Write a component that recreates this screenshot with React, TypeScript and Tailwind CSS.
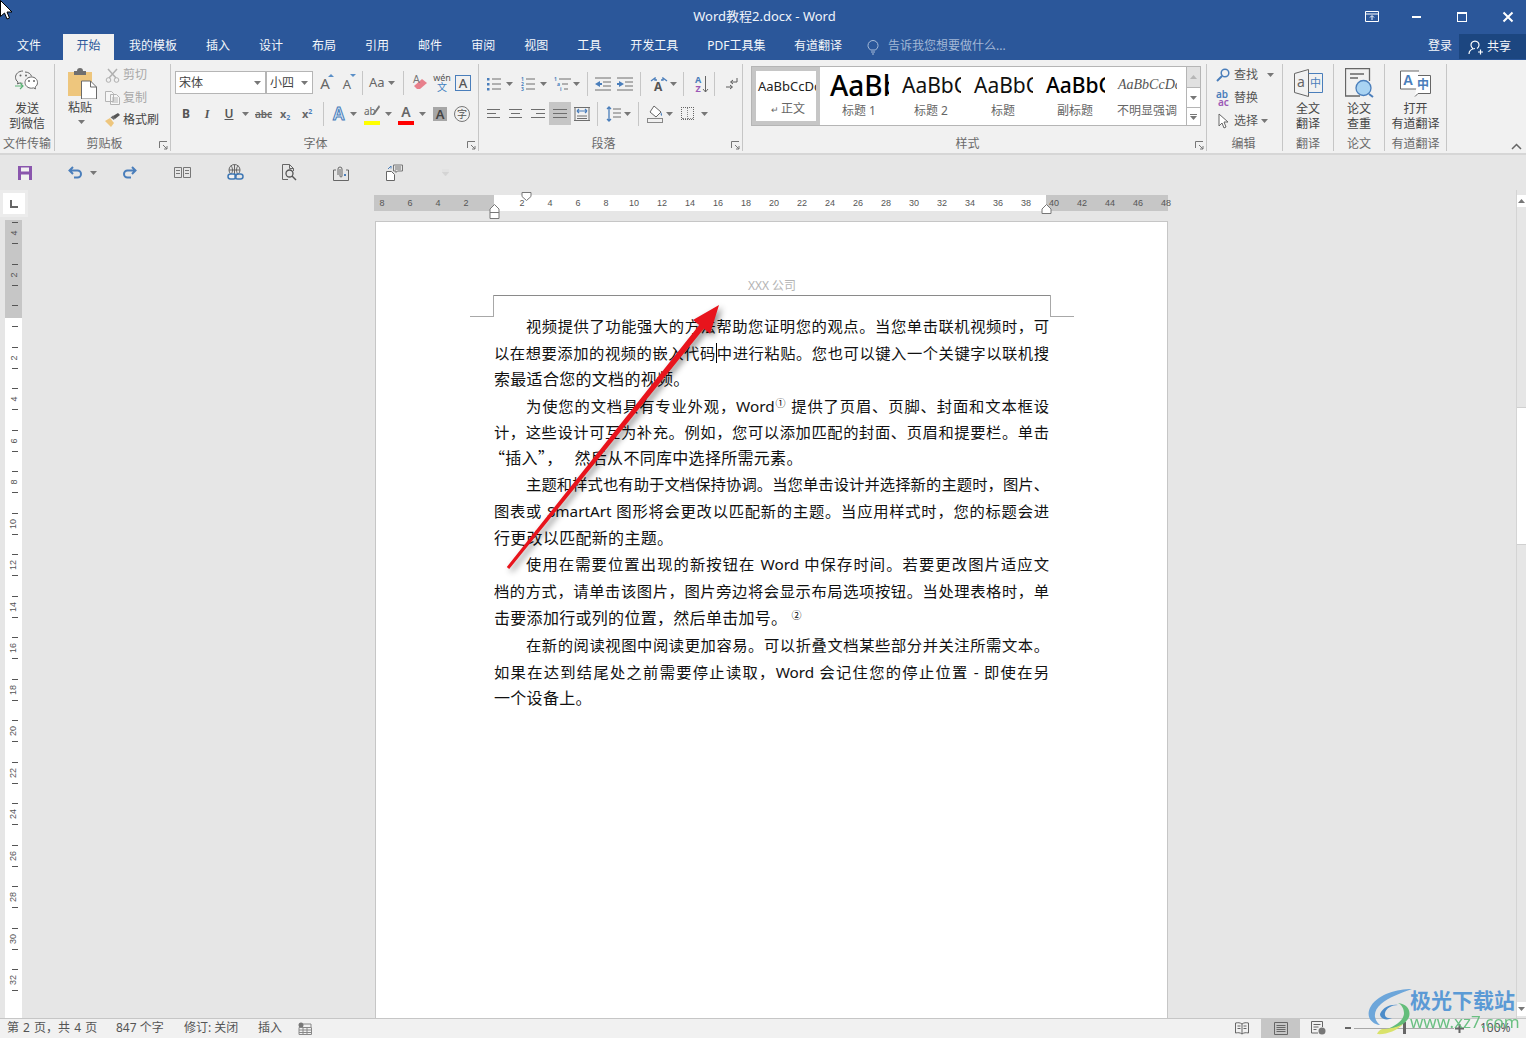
import React from 'react'

type Kids = { children?: React.ReactNode; className?: string }

// small down triangle used next to most ribbon buttons
const Caret = ({ className = '' }: { className?: string }) => (
  <svg width="7" height="4" viewBox="0 0 7 4" className={className}><path d="M0 0h7L3.500 4z" fill="#777" /></svg>
)

const Sep = ({ className = '' }: { className?: string }) => <div className={`w-px h-[24px] bg-[#c6c6c6] ${className}`} />

const Launcher = () => (
  <svg width="9" height="9" viewBox="0 0 9 9" className="absolute right-[2px] bottom-[1px]">
    <path d="M.5 7V.5H8M4 4l4 4M8 5v3H5" fill="none" stroke="#777" />
  </svg>
)

function Group({ className = '', labelClass = '', label, launcher, children }: Kids & { label: string; labelClass?: string; launcher?: boolean }) {
  return (
    <div className={`relative mt-[4px] h-[87px] flex flex-col border-r border-[#c6c6c6] shrink-0 ${className}`}>
      <div className="flex-1 min-h-0">{children}</div>
      <div className={`h-[15px] leading-[15px] text-center text-[12px] text-[#6a6a6a] whitespace-nowrap overflow-hidden ${labelClass}`}>{label}</div>
      {launcher && <Launcher />}
    </div>
  )
}

const tabs = ['插入', '设计', '布局', '引用', '邮件', '审阅', '视图', '工具', '开发工具', 'PDF工具集', '有道翻译']

function TitleBar() {
  return (
    <div className="relative h-[34px] bg-[#2b579a] flex items-center justify-center pl-[3px] shrink-0">
      <span className="text-[13px] text-[#f0f4fa]">Word教程2.docx - Word</span>
      <div className="absolute right-0 top-0 h-[34px] flex items-center text-white">
        <svg width="14" height="12" viewBox="0 0 14 12" className="mr-[33px]"><path d="M.5.5h13v10H.5zM.5 3h13M7 9V5M5 6.500 7 4.500l2 2" fill="none" stroke="#fff" /></svg>
        <div className="w-[9px] h-[2px] bg-white mr-[36px]" />
        <div className="w-[10px] h-[10px] border border-white border-t-2 mr-[35px]" />
        <svg width="12" height="12" viewBox="0 0 12 12" className="mr-[12px]"><path d="M1.500 1.500l9 9M10.500 1.500l-9 9" stroke="#fff" strokeWidth="2" /></svg>
      </div>
    </div>
  )
}

function TabBar() {
  return (
    <div className="h-[26px] bg-[#2b579a] flex items-end text-[12px] text-[#f4f7fb] shrink-0">
      <div className="h-[26px] leading-[24px] ml-[17px] mr-[22px]">文件</div>
      <div className="h-[26px] leading-[24px] px-[13.500px] bg-[#f1f1f1] text-[#2b579a]">开始</div>
      <div className="h-[26px] leading-[24px] ml-[15px]">我的模板</div>
      {tabs.map((t, i) => (
        <div key={t} className={`h-[26px] leading-[24px] whitespace-nowrap ${i === 10 ? 'ml-[28.500px]' : 'ml-[29px]'}`}>{t}</div>
      ))}
      <svg width="12" height="15" viewBox="0 0 12 15" className="ml-[25px] mb-[5px]"><path d="M3.500 10C2 8.500 1 7.500 1 5.500a5 5 0 0 1 10 0c0 2-1 3-2.500 4.500zM4 12h4M5 14h2" fill="none" stroke="#a9bdd9" /></svg>
      <div className="h-[26px] leading-[24px] ml-[9px] text-[#a3b8d6] whitespace-nowrap">告诉我您想要做什么...</div>
      <div className="h-[26px] leading-[24px] ml-auto mr-[7px]">登录</div>
      <div className="h-[25px] mb-[1px] w-[67px] bg-[#1c4680] flex items-center pl-[9px] mr-0">
        <svg width="16" height="16" viewBox="0 0 16 16"><path d="M5 9.500a4 4 0 1 1 4 0M1 15c0-3 2-5 6-5.500M10 13h5M12.500 10.500v5" fill="none" stroke="#fff" strokeWidth="1.200" /></svg>
        <span className="ml-[3px]">共享</span>
      </div>
    </div>
  )
}

function WechatIcon() {
  return (
    <svg width="27" height="24" viewBox="0 0 27 24">
      <path d="M9 2C4.500 2 1.500 5 1.500 8.300c0 2 1 3.600 2.500 4.700l-.5 2 2.500-1.100c.8.300 1.700.4 2.500.4" fill="none" stroke="#666" />
      <path d="M11 3c3.300 0 5.800 1.800 6.600 4.400" fill="none" stroke="#666" />
      <path d="M17.500 8c-3.700 0-6.500 2.600-6.500 5.600s2.800 5.600 6.500 5.600c.7 0 1.400-.1 2-.3l2 1-.4-1.800c1.500-1 2.400-2.700 2.400-4.500C23.500 10.600 21.200 8 17.500 8z" fill="#fff" stroke="#666" />
      <circle cx="6.500" cy="6.500" r="1" fill="#666" /><circle cx="12" cy="6.500" r="1" fill="#666" />
      <circle cx="15" cy="12" r="1" fill="#666" /><circle cx="20" cy="12" r="1" fill="#666" />
      <path d="M1 17h8M6 14l3 3-3 3" fill="none" stroke="#5cb377" strokeWidth="1.200" />
    </svg>
  )
}

function PasteIcon() {
  return (
    <svg width="29" height="31" viewBox="0 0 29 31">
      <path d="M0 4h24v24H0z" fill="#eec67d" />
      <path d="M6 3h3a3 3 0 0 1 6 0h3v4H6z" fill="#6f6f6f" />
      <path d="M13.500 13h9l6 6v12h-15z" fill="#fff" stroke="#6a6a6a" />
      <path d="M22.500 13v6h6" fill="none" stroke="#6a6a6a" />
    </svg>
  )
}

function Clipboard() {
  return (
    <div className="flex h-full pt-[4px]">
      <div className="w-[36px] ml-[13px] flex flex-col items-start">
        <PasteIcon />
        <span className="text-[12px] leading-[14px] mt-[2px] whitespace-nowrap text-[#444]">粘贴</span>
        <Caret className="ml-[10px] mt-[5px]" />
      </div>
      <div className="ml-[1px] flex flex-col -mt-[4px]">
        <div className="flex items-center h-[22.500px] text-[12px] text-[#a8a8a8]">
          <svg width="15" height="15" viewBox="0 0 15 15"><path d="M3 1l8 9M12 1 4 10" stroke="#b0b0b0" strokeWidth="1.500" /><circle cx="3.500" cy="12" r="2.300" fill="none" stroke="#b0b0b0" /><circle cx="11.500" cy="12" r="2.300" fill="none" stroke="#b0b0b0" /></svg>
          <span className="ml-[3px]">剪切</span>
        </div>
        <div className="flex items-center h-[22.500px] text-[12px] text-[#a8a8a8]">
          <svg width="15" height="14" viewBox="0 0 15 14"><path d="M.5.5h6l2 2v8h-8zM5.500 3.500h6l3 3v7h-9zM7 7h6M7 9h6M7 11h6" fill="#f6f6f6" stroke="#b4b4b4" /></svg>
          <span className="ml-[3px]">复制</span>
        </div>
        <div className="flex items-center h-[22.500px] text-[12px] text-[#444]">
          <svg width="15" height="14" viewBox="0 0 15 14"><path d="M0 8l5-3 4 5-3 4z" fill="#eec67d" /><path d="M5.500 4.500 8 2.500l2 2.500-1 2z" fill="#6a6a6a" /><path d="M8 3l5-3 2 2-5 4z" fill="#555" /></svg>
          <span className="ml-[3px]">格式刷</span>
        </div>
      </div>
    </div>
  )
}

function FontGroup() {
  return (
    <div className="pt-[7px] pl-[4px] text-[#555]">
      <div className="flex items-center h-[23px]">
        <div className="w-[91px] h-[23px] bg-white border border-[#b5b5b5] flex items-center px-[3px] text-[12px] text-[#444] shrink-0">
          宋体<Caret className="ml-auto mr-[1px]" />
        </div>
        <div className="w-[47px] h-[23px] bg-white border border-[#b5b5b5] flex items-center px-[3px] text-[12px] text-[#444] shrink-0">
          小四<Caret className="ml-auto mr-[1px]" />
        </div>
        <div className="ml-[3px] w-[18px] h-[18px] relative text-[15px] leading-[18px] text-center text-[#666]">A<span className="absolute right-0 top-0 w-0 h-0 border-x-[3px] border-x-transparent border-b-[3px] border-b-[#5b8fc7]" /></div>
        <div className="ml-[4px] w-[18px] h-[18px] relative text-[13px] leading-[20px] text-center text-[#666]">A<span className="absolute right-0 top-0 w-0 h-0 border-x-[3px] border-x-transparent border-t-[3px] border-t-[#5b8fc7]" /></div>
        <Sep className="ml-[6px]" />
        <span className="ml-[6px] w-[16px] text-[13px] text-[#666]">Aa</span>
        <Caret className="ml-[3px]" />
        <Sep className="ml-[8px]" />
        <svg width="17" height="17" viewBox="0 0 17 17" className="ml-[8px]">
          <path d="M5 15l-3-3 8-7 5 4-7 6z" fill="#e8808c" /><text x="1" y="9" fontSize="10" fill="#777" fontFamily="Liberation Sans">A</text>
        </svg>
        <div className="ml-[5px] w-[16px] h-[19px] flex flex-col items-center leading-none">
          <span className="text-[9px] text-[#555]">wén</span>
          <span className="text-[10px] text-[#3f7fbf]">文</span>
        </div>
        <div className="ml-[5px] w-[16px] h-[16px] border border-[#4a7ebb] text-[13px] leading-[14px] text-center text-[#555] font-medium">A</div>
      </div>
      <div className="flex items-center h-[24px] mt-[8px]">
        <span className="ml-[6px] w-[10px] text-center text-[12px] font-bold text-[#555]">B</span>
        <span className="ml-[11px] w-[10px] text-center text-[12px] italic text-[#555] font-['Liberation_Serif',serif] font-bold">I</span>
        <span className="ml-[12px] w-[10px] text-center text-[12px] font-semibold underline text-[#555]">U</span>
        <Caret className="ml-[8px]" />
        <span className="ml-[6px] text-[10px] line-through text-[#666] font-semibold w-[17px] text-center">abc</span>
        <span className="ml-[8px] w-[13px] text-[11px] font-bold text-[#666]">x<sub className="text-[7px] text-[#4a7ebb]">2</sub></span>
        <span className="ml-[9px] w-[13px] text-[11px] font-bold text-[#666]">x<sup className="text-[7px] text-[#4a7ebb]">2</sup></span>
        <Sep className="ml-[8px]" />
        <span className="ml-[9px] w-[12px] text-[17px] leading-[20px] font-semibold text-[#dbe8f5] [-webkit-text-stroke:1px_#4a7ebb]">A</span>
        <Caret className="ml-[5px]" />
        <div className="relative ml-[7px] w-[16px] h-[21px] flex flex-col items-start">
          <span className="text-[10px] leading-[14px] text-[#666]">ab</span>
          <svg width="9" height="12" viewBox="0 0 9 12" className="absolute right-0 top-0"><path d="M8 1 3 8 1 11l3-1 5-7z" fill="#777" /></svg>
          <div className="w-[16px] h-[4px] mt-[3px] bg-[#ffff00]" />
        </div>
        <Caret className="ml-[5px]" />
        <div className="ml-[6px] w-[16px] h-[21px] flex flex-col items-center">
          <span className="text-[14px] leading-[16px] font-semibold text-[#666]">A</span>
          <div className="w-[16px] h-[4px] mt-[1px] bg-[#ff0000]" />
        </div>
        <Caret className="ml-[5px]" />
        <div className="ml-[7px] w-[14px] h-[14px] bg-[#a6a6a6] text-[13px] leading-[14px] text-center text-[#444] font-semibold">A</div>
        <div className="ml-[7px] w-[16px] h-[16px] rounded-full border border-[#777] text-[10px] leading-[14px] text-center text-[#555]">字</div>
      </div>
    </div>
  )
}

// horizontal stripes, shared by list and alignment icons
function Lines({ rows, className = '' }: { rows: number[][]; className?: string }) {
  const h = rows.length * 4
  return (
    <svg width="16" height={h} viewBox={`0 0 16 ${h}`} className={className}>
      {rows.map((r, i) => <path key={i} d={`M${r[0]} ${i * 4 + 1.5}H${r[1]}`} stroke="#6e6e6e" />)}
    </svg>
  )
}

function ListIcon({ colored }: { colored: string }) {
  return (
    <svg width="14" height="14" viewBox="0 0 14 14">
      <path d="M5 2h9M5 7h9M5 12h9" stroke="#6e6e6e" />
      <rect x="0" y="1" width="2.500" height="2.500" fill={colored} /><rect x="0" y="6" width="2.500" height="2.500" fill={colored} /><rect x="0" y="11" width="2.500" height="2.500" fill={colored} />
    </svg>
  )
}

function ParagraphGroup() {
  return (
    <div className="pt-[8px] pl-[8px]">
      <div className="flex items-center h-[24px]">
        <ListIcon colored="#4a7ebb" />
        <Caret className="ml-[5px]" />
        <svg width="14" height="15" viewBox="0 0 14 15" className="ml-[8px]">
          <path d="M5 2h9M5 7h9M5 12h9" stroke="#6e6e6e" />
          <text x="0" y="4" fontSize="5" fill="#4a7ebb" fontWeight="700">1</text><text x="0" y="9" fontSize="5" fill="#4a7ebb" fontWeight="700">2</text><text x="0" y="14" fontSize="5" fill="#4a7ebb" fontWeight="700">3</text>
        </svg>
        <Caret className="ml-[5px]" />
        <svg width="17" height="15" viewBox="0 0 17 15" className="ml-[7px]">
          <path d="M5 2h12M8 7h6M10 12h4" stroke="#6e6e6e" />
          <text x="0" y="4" fontSize="5" fill="#4a7ebb" fontWeight="700">1</text><text x="3" y="9" fontSize="5" fill="#4a7ebb" fontWeight="700">a</text><text x="6" y="14" fontSize="5" fill="#4a7ebb" fontWeight="700">i</text>
        </svg>
        <Caret className="ml-[2px]" />
        <Sep className="ml-[7px]" />
        <svg width="16" height="14" viewBox="0 0 16 14" className="ml-[7px]"><path d="M0 1h16M8 5h8M8 9h8M0 13h16" stroke="#6e6e6e" /><path d="M0 7l5-3v2h2v2H5v2z" fill="#4a7ebb" /></svg>
        <svg width="16" height="14" viewBox="0 0 16 14" className="ml-[6px]"><path d="M0 1h16M8 5h8M8 9h8M0 13h16" stroke="#6e6e6e" /><path d="M7 7 2 4v2H0v2h2v2z" fill="#4a7ebb" /></svg>
        <Sep className="ml-[7px]" />
        <svg width="18" height="15" viewBox="0 0 18 15" className="ml-[9px]"><path d="M1 4l4-3v2h2M17 4l-4-3v2h-2" fill="none" stroke="#4a7ebb" strokeWidth="1.300" /><text x="4" y="14" fontSize="12" fill="#555" fontWeight="700">A</text></svg>
        <Caret className="ml-[2px]" />
        <Sep className="ml-[6px]" />
        <div className="ml-[10px] w-[8px] flex flex-col text-[9px] leading-[9px] font-bold text-center">
          <span className="text-[#4a7ebb]">A</span><span className="text-[#9b59b6]">Z</span>
        </div>
        <svg width="7" height="17" viewBox="0 0 7 17"><path d="M3.500 0v16M1 13l2.500 3L6 13" fill="none" stroke="#666" /></svg>
        <Sep className="ml-[5px]" />
        <svg width="12" height="13" viewBox="0 0 12 13" className="ml-[11px]"><path d="M11 0v4H5M7 2 4.500 4 7 6M0 9h6M4 7l2.500 2L4 11" fill="none" stroke="#5a5a5a" /></svg>
      </div>
      <div className="flex items-center h-[23px] mt-[6px]">
        <Lines rows={[[0, 13], [0, 9], [0, 13]]} />
        <Lines rows={[[0, 13], [2, 11], [0, 13]]} className="ml-[6px]" />
        <Lines rows={[[0, 14], [5, 14], [0, 14]]} className="ml-[6px]" />
        <div className="ml-[2px] w-[22px] h-[23px] bg-[#c6c6c6] flex items-center justify-center"><Lines rows={[[0, 14], [0, 14], [0, 14]]} className="ml-[2px]" /></div>
        <svg width="16" height="16" viewBox="0 0 16 16" className="ml-[3px]"><path d="M0 1.500h16M0 14.500h16M1 1v14M15 1v14M3 10h10M3 12.500h10" stroke="#6e6e6e" /><path d="M3 5h10M3 5l2-2M3 5l2 2M13 5l-2-2M13 5l-2 2" fill="none" stroke="#4a7ebb" strokeWidth="1.200" /></svg>
        <Sep className="ml-[7px]" />
        <svg width="15" height="16" viewBox="0 0 15 16" className="ml-[8px]"><path d="M3 1v14M1 3l2-2 2 2M1 13l2 2 2-2" fill="none" stroke="#4a7ebb" strokeWidth="1.300" /><path d="M7 3h8M7 7h8M7 11h8" stroke="#6e6e6e" /></svg>
        <Caret className="ml-[3px]" />
        <Sep className="ml-[7px]" />
        <svg width="16" height="18" viewBox="0 0 16 18" className="ml-[8px]"><path d="M7 1l7 6-5 5-6-5z" fill="#fff" stroke="#666" /><path d="M14 7c1 2 1.500 3 .5 4-1-1-1-2-.5-4z" fill="#4a7ebb" /><rect x=".5" y="13.500" width="15" height="4" fill="none" stroke="#888" /></svg>
        <Caret className="ml-[3px]" />
        <div className="ml-[8px] w-[13px] h-[13px] border border-dotted border-[#666] grid grid-cols-2"><div className="border-r border-b border-dotted border-[#888]" /><div className="border-b border-dotted border-[#888]" /></div>
        <Caret className="ml-[7px]" />
      </div>
    </div>
  )
}

function Styles() {
  const items = [
    { label: '标题 1', cls: 'text-[28px] font-medium leading-[36px] text-black' },
    { label: '标题 2', cls: 'text-[21px] leading-[36px] text-[#111]' },
    { label: '标题', cls: 'text-[21px] leading-[36px] text-[#111]' },
    { label: '副标题', cls: 'text-[21px] font-medium leading-[36px] text-black' },
    { label: '不明显强调', cls: "text-[14px] italic leading-[36px] text-[#555] font-['Liberation_Serif',serif]" },
  ]
  return (
    <div className="flex pt-[2px] pl-[8px]">
      <div className="w-[435px] h-[60px] bg-white border border-[#b5b5b5] border-r-0 flex">
        <div className="w-[68px] h-[58px] border-[4px] border-[#c6c6c6] flex flex-col items-center shrink-0">
          <div className="w-[60px] pl-[2px] overflow-hidden whitespace-nowrap text-[13px] leading-[30px] text-[#222]">AaBbCcDd</div>
          <div className="text-[12px] leading-[16px] pl-[4px] text-[#666] whitespace-nowrap"><span className="text-[9px] mr-[2px]">↵</span>正文</div>
        </div>
        {items.map(it => (
          <div key={it.label} className="w-[72px] pl-[6px] flex flex-col items-center shrink-0">
            <div className={`w-[60px] pl-[1px] overflow-hidden whitespace-nowrap h-[36px] ${it.cls}`}>AaBbCcDd</div>
            <div className="text-[12px] leading-[14px] mt-[1px] text-[#666] whitespace-nowrap">{it.label}</div>
          </div>
        ))}
      </div>
      <div className="w-[15px] h-[60px] flex flex-col">
        <div className="h-[22px] bg-[#e1e1e1] border border-[#b5b5b5] flex items-center justify-center"><Caret className="rotate-180 opacity-40" /></div>
        <div className="h-[19px] bg-white border-x border-[#b5b5b5] flex items-center justify-center"><Caret /></div>
        <div className="h-[19px] bg-white border border-[#b5b5b5] flex flex-col items-center justify-center"><div className="w-[7px] h-px bg-[#777] mb-px" /><Caret /></div>
      </div>
    </div>
  )
}

function EditGroup() {
  return (
    <div className="-mt-px pl-[9px] flex flex-col text-[12px] text-[#555]">
      <div className="flex items-center h-[23px]">
        <svg width="14" height="14" viewBox="0 0 14 14"><circle cx="9" cy="5" r="3.800" fill="none" stroke="#4a7ebb" strokeWidth="1.500" /><path d="M6 8l-5 5" stroke="#4a7ebb" strokeWidth="2" /></svg>
        <span className="ml-[4px]">查找</span><Caret className="ml-[9px]" />
      </div>
      <div className="flex items-center h-[23px]">
        <div className="w-[14px] text-[10px] leading-[8px] font-semibold"><div className="text-[#4a7ebb]">ab</div><div className="text-[#9b59b6] pl-[2px]">ac</div></div>
        <span className="ml-[4px]">替换</span>
      </div>
      <div className="flex items-center h-[23px]">
        <svg width="14" height="16" viewBox="0 0 14 16"><path d="M3 1v12l3-3 2 5 2-1-2-5h4z" fill="#fff" stroke="#666" /></svg>
        <span className="ml-[4px]">选择</span><Caret className="ml-[3px]" />
      </div>
    </div>
  )
}

function BigButton({ icon, lines }: { icon: React.ReactNode; lines: string[] }) {
  return (
    <div className="flex flex-col items-center pt-[4px] text-[12px] leading-[15px] text-[#444] whitespace-nowrap">
      <div className="h-[30px] mb-[3px] flex items-center">{icon}</div>
      {lines.map(l => <span key={l}>{l}</span>)}
    </div>
  )
}

function Ribbon() {
  return (
    <div className="relative h-[95px] bg-[#f1f1f1] border-b-2 border-[#d6d6d6] flex shrink-0">
      <Group className="w-[55px]" label="文件传输">
        <div className="flex flex-col items-center pt-[5px] text-[12px] leading-[15px] text-[#444]">
          <WechatIcon />
          <span className="mt-[8px]">发送</span><span>到微信</span>
        </div>
      </Group>
      <Group className="w-[116px]" labelClass="pr-[16px]" label="剪贴板" launcher><Clipboard /></Group>
      <Group className="w-[308px]" labelClass="pr-[18px]" label="字体" launcher><FontGroup /></Group>
      <Group className="w-[264px]" labelClass="pr-[14px]" label="段落" launcher><ParagraphGroup /></Group>
      <Group className="w-[464px]" labelClass="pr-[14px]" label="样式" launcher><Styles /></Group>
      <Group className="w-[76px]" labelClass="pr-[2px]" label="编辑"><EditGroup /></Group>
      <Group className="w-[51px]" label="翻译">
        <BigButton lines={['全文', '翻译']} icon={
          <svg width="29" height="28" viewBox="0 0 29 28"><path d="M.5 4.500 14.500.5v27l-14-4z" fill="none" stroke="#666" /><path d="M14.500 4.500h14v19h-14" fill="none" stroke="#4a7ebb" /><text x="3" y="18" fontSize="14" fill="#666">a</text><text x="16" y="18" fontSize="11" fill="#4a7ebb">中</text></svg>
        } />
      </Group>
      <Group className="w-[51px]" label="论文">
        <BigButton lines={['论文', '查重']} icon={
          <svg width="29" height="30" viewBox="0 0 29 30"><path d="M15 28H.5V.5h24V13" fill="none" stroke="#666" strokeWidth="1.300" /><path d="M5 6h14M5 10h8" stroke="#666" strokeWidth="1.300" /><circle cx="18.500" cy="20" r="7.500" fill="#a9d3f2" stroke="#4a7ebb" strokeWidth="1.300" /><path d="M24 26l4 3" stroke="#4a7ebb" strokeWidth="2" /></svg>
        } />
      </Group>
      <Group className="w-[62px]" label="有道翻译">
        <BigButton lines={['打开', '有道翻译']} icon={
          <svg width="31" height="27" viewBox="0 0 31 27"><path d="M19 1H.5v18H17" fill="#fff" stroke="#666" /><text x="3" y="15" fontSize="14" fontWeight="700" fill="#4a7ebb" fontFamily="Liberation Sans">A</text><path d="M18 5.500h12.500v18H18l-3 3" fill="#fff" stroke="#666" /><text x="17" y="19" fontSize="12" fontWeight="700" fill="#4a7ebb">中</text></svg>
        } />
      </Group>
      <svg width="11" height="7" viewBox="0 0 11 7" className="absolute right-[4px] bottom-[3px]"><path d="M1 6l4.500-4.500L10 6" fill="none" stroke="#666" strokeWidth="1.500" /></svg>
    </div>
  )
}

function Qat() {
  return (
    <div className="h-[35px] flex items-center shrink-0">
      <svg width="14" height="14" viewBox="0 0 14 14" className="ml-[18px]"><path d="M0 0h14v14H0z" fill="#8a56ad" /><path d="M3 1.500h8v4H3z" fill="#f1f1f1" /><path d="M3 8.500h8V14H3z" fill="#f1f1f1" /></svg>
      <svg width="15" height="13" viewBox="0 0 15 13" className="ml-[36px]"><path d="M5 1 1.500 4.500 5 8M2 4.500h7.500a3.500 3.500 0 0 1 0 7H6" fill="none" stroke="#4a7ebb" strokeWidth="2" /></svg>
      <Caret className="ml-[7px]" />
      <svg width="15" height="13" viewBox="0 0 15 13" className="ml-[25px]"><path d="M10 1l3.500 3.500L10 8M13 4.500H5.500a3.500 3.500 0 0 0 0 7H9" fill="none" stroke="#4a7ebb" strokeWidth="2" /></svg>
      <svg width="17" height="13" viewBox="0 0 17 13" className="ml-[37px]"><path d="M.5 1.500h7v10h-7zM9.500 1.500h7v10h-7zM2 4.500h4M2 7.500h4M11 4.500h4M11 7.500h4" fill="none" stroke="#777" /></svg>
      <svg width="17" height="17" viewBox="0 0 17 17" className="ml-[36px]"><circle cx="7.500" cy="6" r="5.500" fill="none" stroke="#666" /><path d="M2 6h11M7.500.500v11M4 1.500c2 3 2 6 0 9M11 1.500c-2 3-2 6 0 9" fill="none" stroke="#666" /><rect x="1" y="10" width="8" height="5" rx="2.500" fill="#f1f1f1" stroke="#3f78b5" strokeWidth="1.500" /><rect x="8" y="10" width="8" height="5" rx="2.500" fill="none" stroke="#3f78b5" strokeWidth="1.500" /></svg>
      <svg width="15" height="17" viewBox="0 0 15 17" className="ml-[38px]"><path d="M6 15.500H.5V.5h7l4 4V7M7.500.500v4h4" fill="none" stroke="#666" /><circle cx="7.500" cy="9.500" r="3.500" fill="none" stroke="#555" strokeWidth="1.300" /><path d="M10 12l4 4" stroke="#555" strokeWidth="1.500" /></svg>
      <svg width="16" height="16" viewBox="0 0 16 16" className="ml-[36px]"><path d="M3 5H.5v10.500h15V5H13" fill="none" stroke="#666" /><path d="M5 10V4a2 2 0 0 1 4 0v7a1 1 0 0 1-2 0V4" fill="none" stroke="#666" /><path d="M11 9h2v2h-2z" fill="#4a7ebb" /></svg>
      <svg width="17" height="17" viewBox="0 0 17 17" className="ml-[37px]"><path d="M.5 7.500h5l3 3v6h-8z" fill="#fff" stroke="#666" /><path d="M7.500 1h9v6h-5l-1.500 1.500V7h-2.500zM9 3h6M9 5h6" fill="none" stroke="#777" /><path d="M2 5l3-3M5 2v2.500" stroke="#4a7ebb" /></svg>
      <svg width="7" height="7" viewBox="0 0 7 7" className="ml-[39px] opacity-40"><path d="M0 1h7M0 3h7l-3.500 4z" fill="#bbb" stroke="#bbb" strokeWidth=".5" /></svg>
    </div>
  )
}

const hLabels = (from: number, to: number) => {
  const out: number[] = []
  for (let n = from; n <= to; n += 2) out.push(n)
  return out
}

const RulerNum = ({ n }: { n: number }) => (
  <div className="w-[28px] shrink-0 text-center text-[9px] leading-[16px] text-[#555]">{n}</div>
)

function HRuler() {
  return (
    <div className="relative mt-[5px] ml-[346px] w-[794px] h-[16px] flex font-['Liberation_Sans',sans-serif]">
      <div className="w-[120px] bg-[#c6c6c6] flex justify-end pr-[14px] overflow-visible">
        {[8, 6, 4, 2].map(n => <RulerNum key={n} n={n} />)}
      </div>
      <div className="w-[552px] bg-white flex pl-[14px]">
        {hLabels(2, 38).map(n => <RulerNum key={n} n={n} />)}
      </div>
      <div className="w-[122px] bg-[#c6c6c6] flex">
        <div className="flex -ml-[6px]">{hLabels(40, 48).map(n => <RulerNum key={n} n={n} />)}</div>
      </div>
      {/* indent markers */}
      <svg width="12" height="12" viewBox="0 0 12 12" className="absolute left-[147px] -top-[3px]"><path d="M1 .5h9v4l-4.500 4-4.500-4z" fill="#fff" stroke="#777" /></svg>
      <svg width="12" height="16" viewBox="0 0 12 16" className="absolute left-[115px] top-[9px]"><path d="M1 5l4.500-4.500L10 5v9.500H1zM1 8.500h9" fill="#fff" stroke="#777" /></svg>
      <svg width="12" height="10" viewBox="0 0 12 10" className="absolute left-[667px] top-[9px]"><path d="M1 5l4.500-4.500L10 5v4.500H1z" fill="#fff" stroke="#777" /></svg>
    </div>
  )
}

function VRuler() {
  const cells = [4, 2, 0, ...hLabels(2, 32)]
  return (
    <div className="ml-[5px] w-[17px] flex-1 mt-[3px] overflow-hidden bg-[linear-gradient(#c6c6c6_98px,#fff_98px)] font-['Liberation_Sans',sans-serif]">
      <div className="-mt-[8px] pl-[2px]">
        {cells.map(n => (
          <div key={n} className="h-[41.500px] pt-[10px] flex flex-col items-center text-[9px] text-[#555]">
            <div className="w-[6px] h-px bg-[#555]" />
            <div className="h-[20px] flex items-center justify-center -rotate-90">{n > 0 ? n : ''}</div>
            <div className="w-[6px] h-px bg-[#555]" />
          </div>
        ))}
      </div>
    </div>
  )
}

// full lines are squeezed to the measure, paragraph ends keep the natural 16px width
const Line = ({ children, indent, last, className = '' }: Kids & { indent?: boolean; last?: boolean }) => (
  <div className={`h-[26.600px] leading-[26.600px] whitespace-nowrap overflow-visible ${last ? 'text-[16px] tracking-[0.3px]' : 'text-justify [text-align-last:justify]'} ${indent ? 'pl-[32px]' : ''} ${className}`}>
    {children}
  </div>
)

function Page() {
  return (
    <div className="ml-[347px] w-[793px] flex-1 bg-white border border-[#c6c6c6] border-b-0 mt-[10px] pl-[118px] text-[15.300px] text-[#111] min-h-0">
      <div className="relative w-[556px] h-[74px] border-b border-[#8a8a8a] flex items-end justify-center text-[12px] leading-[20px] text-[#b4b4b4]">
        <span className="-mb-px">XXX 公司</span>
        <div className="absolute left-[-24px] top-[73px] w-[24px] h-[22px] border-r border-b border-[#a8a8a8]" />
        <div className="absolute right-[-24px] top-[73px] w-[24px] h-[22px] border-l border-b border-[#a8a8a8]" />
      </div>
      <div className="w-[555px] mt-[17px]">
        <Line indent>视频提供了功能强大的方法帮助您证明您的观点。当您单击联机视频时，可</Line>
        <Line>以在想要添加的视频的嵌入代码<span className="border-l border-black">中</span>进行粘贴。您也可以键入一个关键字以联机搜</Line>
        <Line last>索最适合您的文档的视频。</Line>
        <Line indent>为使您的文档具有专业外观，Word<sup className="text-[10px] text-black">①</sup> 提供了页眉、页脚、封面和文本框设</Line>
        <Line>计，这些设计可互为补充。例如，您可以添加匹配的封面、页眉和提要栏。单击</Line>
        <Line last className="-mt-[2px] font-['Noto_Sans_CJK_SC',sans-serif]"><span className="-ml-[5px]">“插入”，</span><span className="ml-[12px]">然后从不同库中选择所需元素。</span></Line>
        <Line indent>主题和样式也有助于文档保持协调。当您单击设计并选择新的主题时，图片、</Line>
        <Line className="mt-[1px]">图表或 SmartArt 图形将会更改以匹配新的主题。当应用样式时，您的标题会进</Line>
        <Line last>行更改以匹配新的主题。</Line>
        <Line indent>使用在需要位置出现的新按钮在 Word 中保存时间。若要更改图片适应文</Line>
        <Line>档的方式，请单击该图片，图片旁边将会显示布局选项按钮。当处理表格时，单</Line>
        <Line last>击要添加行或列的位置，然后单击加号。<sup className="text-[10px] text-black ml-[4px]">②</sup></Line>
        <Line indent className="mt-[1px]">在新的阅读视图中阅读更加容易。可以折叠文档某些部分并关注所需文本。</Line>
        <Line>如果在达到结尾处之前需要停止读取，Word 会记住您的停止位置 - 即使在另</Line>
        <Line last>一个设备上。</Line>
      </div>
    </div>
  )
}

function Scrollbar() {
  return (
    <div className="w-[10px] pt-[5px] flex flex-col items-center bg-[#e6e6e6] border-l border-[#d4d4d4]">
      <div className="h-[12px] w-full bg-white flex items-center justify-center"><Caret className="rotate-180" /></div>
      <div className="mt-[200px] w-full h-[138px] bg-white border-y border-[#d0d0d0]" />
      <div className="mt-auto h-[14px] w-full bg-white flex items-center justify-center mb-[2px]"><Caret /></div>
    </div>
  )
}

function StatusBar() {
  return (
    <div className="h-[20px] pb-[1px] bg-[#f1f1f1] border-t border-[#c6c6c6] flex items-center text-[12px] text-[#555] shrink-0 whitespace-nowrap">
      <span className="ml-[7px] w-[109px] [word-spacing:1px]">第 2 页，共 4 页</span>
      <span className="w-[68px]">847 个字</span>
      <span className="w-[74px]">修订: 关闭</span>
      <span className="w-[40px]">插入</span>
      <svg width="14" height="13" viewBox="0 0 14 13"><circle cx="3" cy="3" r="2.500" fill="#777" /><path d="M1 5.500h12.500v7H1zM1 8h12M1 10.500h12M5 5.500v7M9 5.500v7M5 2h8v3" fill="none" stroke="#888" /></svg>
      <svg width="14" height="13" viewBox="0 0 14 13" className="ml-auto"><path d="M7 2C5 .5 3 .5.500 1v10c2.500-.5 4.500-.5 6.500 1 2-1.500 4-1.500 6.500-1V1C11 .5 9 .5 7 2v10M2.500 4h3M2.500 6.500h3M8.500 4h3M8.500 6.500h3" fill="none" stroke="#666" /></svg>
      <div className="ml-[12px] w-[39px] h-[19px] bg-[#c6c6c6] flex items-center justify-center">
        <svg width="14" height="13" viewBox="0 0 14 13"><path d="M.5.500h13v12H.5zM2.500 3.500h9M2.500 5.500h9M2.500 7.500h9M2.500 9.500h9" fill="none" stroke="#666" /></svg>
      </div>
      <svg width="15" height="14" viewBox="0 0 15 14" className="ml-[11px]"><path d="M7 12H.5V.5h11V6M2.500 3.500h7M2.500 6h5M2.500 8.500h3" fill="none" stroke="#666" /><circle cx="11" cy="10" r="3.500" fill="#777" /></svg>
      <div className="ml-[19px] w-[6px] h-[2px] bg-[#666]" />
      <div className="relative ml-[3px] w-[100px] h-px bg-[#a8a8a8]">
        <div className="absolute left-[49px] -top-[6px] w-[3px] h-[12px] bg-[#666]" />
      </div>
      <svg width="9" height="9" viewBox="0 0 9 9" className="ml-[1px]"><path d="M0 4.500h9M4.500 0v9" stroke="#666" strokeWidth="2" /></svg>
      <span className="ml-[16px] mr-[15px] w-[31px]">100%</span>
    </div>
  )
}

function Watermark() {
  return (
    <div className="absolute left-[1367px] top-[986px] flex pointer-events-none">
      <svg width="46" height="50" viewBox="0 0 46 50">
        <path d="M45 3C30 3 12 8 4 20-2 30 4 38 13 39 6 33 6 25 14 18 22 11 34 7 45 3z" fill="#5f9fd8" opacity=".9" />
        <path d="M13 28c3-7 11-10 18-9-6 0-12 3-13 8-1 4 3 6 7 5-5 3-12 1-12-4z" fill="#4c8cc9" />
        <path d="M31 17c9 1 13 7 11 14-3 7-12 12-22 12 8-3 16-8 17-15 0-5-2-9-6-11z" fill="#63bd7a" />
        <path d="M10 48c8 1 20-3 26-10-5 3-14 5-21 5-3 1-4 3-5 5z" fill="#d9e26a" />
      </svg>
      <div className="-ml-[3px] flex flex-col">
        <span className="text-[21px] leading-[28px] font-bold text-[#5b9ad5] whitespace-nowrap">极光下载站</span>
        <span className="text-[17px] leading-[17px] text-[#5dbb78] whitespace-nowrap -mt-[1px] opacity-90">www.xz7.com</span>
      </div>
    </div>
  )
}

export default function App() {
  return (
    <div className="relative w-[1526px] h-[1038px] overflow-hidden flex flex-col bg-[#e6e6e6] font-['Noto_Sans','Noto_Sans_CJK_SC',sans-serif]">
      <TitleBar />
      <TabBar />
      <Ribbon />
      <Qat />
      <div className="flex flex-1 min-h-0">
        <div className="w-[28px] shrink-0 flex flex-col">
          <div className="w-[28px] h-[27px] bg-[#ececec] flex items-center justify-center shrink-0">
            <div className="w-[22px] h-[21px] bg-white flex items-center justify-center">
              <div className="w-[8px] h-[8px] border-l-2 border-b-2 border-[#666]" />
            </div>
          </div>
          <VRuler />
        </div>
        <div className="flex-1 flex flex-col min-w-0">
          <HRuler />
          <Page />
        </div>
        <Scrollbar />
      </div>
      <StatusBar />
      <Watermark />

      {/* red annotation arrow drawn on top of the screenshot */}
      <svg width="230" height="275" viewBox="500 300 230 275" className="absolute left-[500px] top-[300px] drop-shadow-[3px_3px_3px_rgba(0,0,0,0.45)]">
        <path d="M506.800 567 699.200 324.900 692.900 319.900 719 305 710.100 333.700 703.800 328.700 509.200 569z" fill="#e8141c" />
      </svg>

      {/* mouse pointer */}
      <svg width="13" height="21" viewBox="0 0 13 21" className="absolute left-0 top-0">
        <path d="M.5.500v16l4-3.500 2.500 6 2.500-1-2.500-6h5z" fill="#fff" stroke="#000" />
      </svg>
    </div>
  )
}
